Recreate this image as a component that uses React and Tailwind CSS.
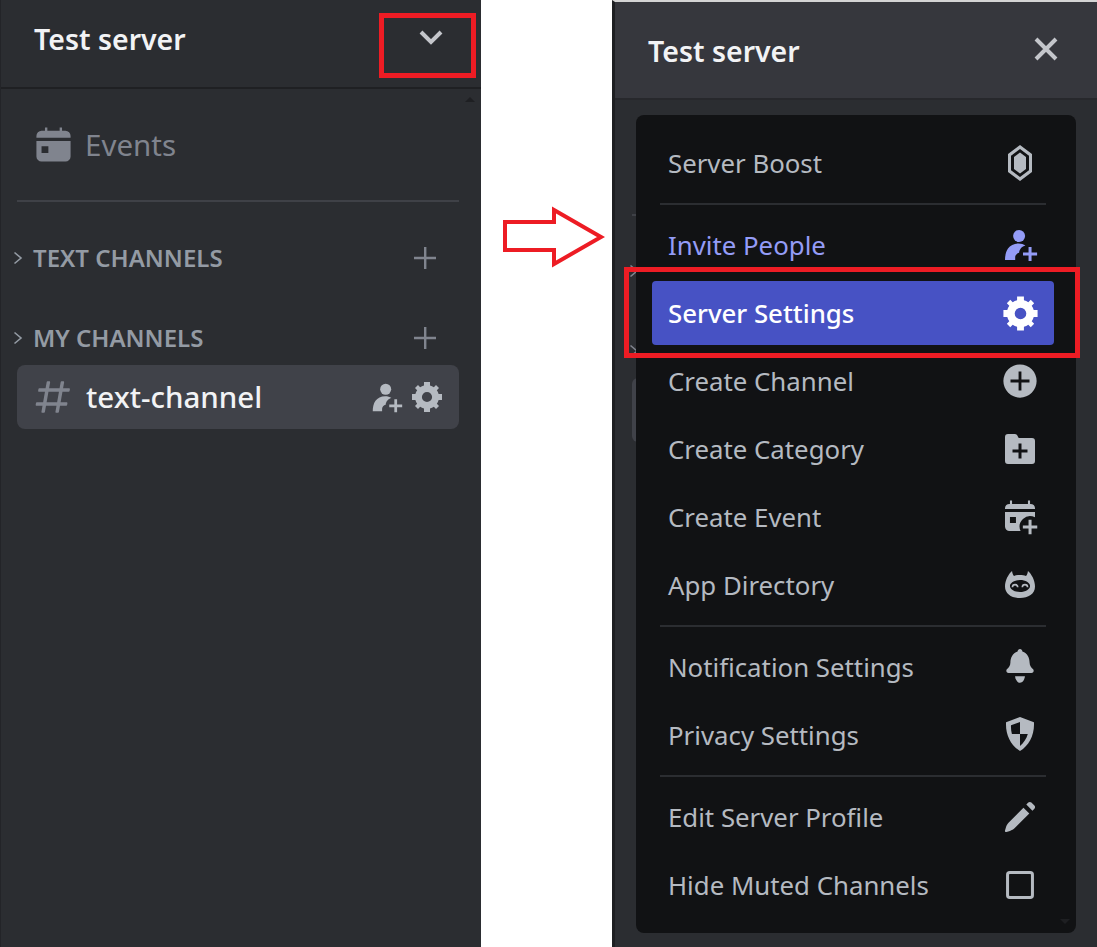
import React from "react";

const GEAR =
  "M19.738 10H22V14H19.739C19.498 14.931 19.1 15.798 18.565 16.564L20 18L18 20L16.565 18.564C15.797 19.099 14.932 19.498 14 19.738V22H10V19.738C9.069 19.498 8.203 19.099 7.436 18.564L6 20L4 18L5.436 16.564C4.901 15.799 4.502 14.932 4.262 14H2V10H4.262C4.502 9.068 4.9 8.202 5.436 7.436L4 6L6 4L7.436 5.436C8.202 4.9 9.068 4.502 10 4.262V2H14V4.261C14.932 4.502 15.797 4.9 16.565 5.435L18 4L20 6L18.564 7.436C19.099 8.202 19.498 9.069 19.738 10ZM12 15.4A3.4 3.4 0 1 0 12 8.6A3.4 3.4 0 1 0 12 15.4Z";

const HASH =
  "M5.88657 21C5.57547 21 5.3399 20.7189 5.39427 20.4126L6.00001 17H2.59511C2.28449 17 2.04905 16.7198 2.10259 16.4138L2.27759 15.4138C2.31946 15.1746 2.52722 15 2.77011 15H6.35001L7.41001 9H4.00511C3.69449 9 3.45905 8.71977 3.51259 8.41381L3.68759 7.41381C3.72946 7.17456 3.93722 7 4.18011 7H7.76001L8.39677 3.41262C8.43914 3.17391 8.64664 3 8.88907 3H9.87344C10.1845 3 10.4201 3.28107 10.3657 3.58738L9.76001 7H15.76L16.3968 3.41262C16.4391 3.17391 16.6466 3 16.8891 3H17.8734C18.1845 3 18.4201 3.28107 18.3657 3.58738L17.76 7H21.1649C21.4755 7 21.711 7.28023 21.6574 7.58619L21.4824 8.58619C21.4406 8.82544 21.2328 9 20.9899 9H17.41L16.35 15H19.7549C20.0655 15 20.301 15.2802 20.2474 15.5862L20.0724 16.5862C20.0306 16.8254 19.8228 17 19.5799 17H16L15.3632 20.5874C15.3209 20.8261 15.1134 21 14.8709 21H13.8866C13.5755 21 13.3399 20.7189 13.3943 20.4126L14 17H8.00001L7.36325 20.5874C7.32088 20.8261 7.11337 21 6.87094 21H5.88657ZM9.41045 9L8.35045 15H14.3504L15.4104 9H9.41045Z";

function Svg({ size = 36, className = "", children }) {
  return (
    <svg width={size} height={size} viewBox="0 0 24 24" fill="currentColor" className={`shrink-0 ${className}`}>
      {children}
    </svg>
  );
}

const GearIcon = (p) => <Svg {...p}><path fillRule="evenodd" d={GEAR} /></Svg>;
const HashIcon = (p) => <Svg {...p}><path d={HASH} /></Svg>;

function InviteIcon(p) {
  return (
    <Svg {...p}>
      <circle cx="11.4" cy="6" r="4" />
      <path d="M2 22c0-2.600.5-5.500 2-7.600C5.500 12.200 8 11 11 11c1.800 0 3.500.5 4.600 1.300-2.300.5-4 2.500-4.200 4.900-1.500.3-2.600 1.500-2.600 3V22H2z" />
      <path d="M17.700 13.300h2v3.700h3.700v2h-3.700v3.700h-2V19H14v-2h3.700z" />
    </Svg>
  );
}

function CalendarIcon(p) {
  return (
    <Svg {...p}>
      <path d="M7 2h1.400v2h7.200V2H17v2h2a3 3 0 0 1 3 3v1H2V7a3 3 0 0 1 3-3h2z" />
      <path fillRule="evenodd" d="M2 10h20v9a3 3 0 0 1-3 3H5a3 3 0 0 1-3-3v-9zm3 3v4h4v-4H5z" />
    </Svg>
  );
}

function BoostIcon(p) {
  return (
    <Svg {...p}>
      <path fillRule="evenodd" d="M12 0l8 6v12l-8 6-8-6V6l8-6zm0 2.600L6 7.200v9.600l6 4.600 6-4.600V7.200l-6-4.600z" />
      <path d="M12 5l4 3v8l-4 3-4-3V8z" />
    </Svg>
  );
}

function CirclePlusIcon(p) {
  return (
    <Svg {...p}>
      <path
        fillRule="evenodd"
        d="M12 1.500a10.500 10.500 0 1 1 0 21 10.500 10.500 0 0 1 0-21zM11.100 6v5.100H6v1.800h5.100V18h1.800v-5.100H18v-1.800h-5.100V6h-1.800z"
      />
    </Svg>
  );
}

function FolderPlusIcon(p) {
  return (
    <Svg {...p}>
      <path
        fillRule="evenodd"
        d="M4 2h4.500c1.300 0 1.700.8 2.200 2 .2.500.500.700 1 .700H20a2 2 0 0 1 2 2V20a2 2 0 0 1-2 2H4a2 2 0 0 1-2-2V4a2 2 0 0 1 2-2zm7 6.400v4H7v2h4v4h2v-4h4v-2h-4v-4h-2z"
      />
    </Svg>
  );
}

function EventPlusIcon(p) {
  return (
    <Svg {...p}>
      <path d="M5.300 1h1.400v2.300h10.600V1h1.400v2.300h.3A3 3 0 0 1 22 6v.700H2V6a3 3 0 0 1 3-2.700h.3z" />
      <path
        fillRule="evenodd"
        d="M2 8.700h20v3.500a7 7 0 0 0-9.600 9.100H5a3 3 0 0 1-3-3V8.700zm3.300 3.300v4h4v-4h-4z"
      />
      <path d="M17.700 13.900h2v3.800h3.800v2h-3.800v3.800h-2v-3.800h-3.800v-2h3.800z" />
    </Svg>
  );
}

function BotIcon(p) {
  return (
    <Svg {...p}>
      <path
        fillRule="evenodd"
        d="M6.700 2.700C6.900 4 7.200 5.200 8 6c1.200-.5 2.500-.7 4-.7s2.800.2 4 .7c.8-.8 1.100-2 1.300-3.300C19.700 4.700 22 9 22 13c0 5-4.500 7.700-10 7.700S2 18 2 13c0-4 2.300-8.300 4.700-10.300zM12 8.700c-3.700 0-6.700 1.800-6.700 4s3 4 6.700 4 6.700-1.800 6.700-4-3-4-6.700-4z"
      />
      <path d="M6.400 13.500a2.300 2.300 0 0 1 4.600 0H9.900a1.200 1.200 0 0 0-2.400 0H6.400zM13 13.500a2.300 2.300 0 0 1 4.600 0h-1.100a1.200 1.200 0 0 0-2.400 0H13z" />
    </Svg>
  );
}

function BellIcon(p) {
  return (
    <Svg {...p}>
      <path d="M12 0c.9 0 1.500.6 1.600 1.600C17 2.600 18.400 6 18.400 9c0 2.400 1.200 3.400 2.200 4.300.9.800.7 2.700-1 2.700H4.400c-1.700 0-1.900-1.900-1-2.700 1-.9 2.200-1.900 2.200-4.300C5.600 6 7 2.600 10.400 1.600 10.500.6 11.100 0 12 0z" />
      <path d="M8.700 18.200h6.600c-.3 2.500-1.700 4.300-3.300 4.300s-3-1.800-3.300-4.300z" />
    </Svg>
  );
}

function ShieldIcon(p) {
  return (
    <Svg {...p}>
      <path
        fillRule="evenodd"
        d="M12 0l9.300 3.500c.5 8.500-3.300 15.500-9.300 19.200C6 19 2.200 12 2.700 3.500L12 0zm0 3.300L6 5.500c-.1 2 .1 4 .6 5.800H12v-8zm0 8v8c2.500-2.100 4.300-4.800 5.200-8H12z"
      />
    </Svg>
  );
}

function PencilIcon(p) {
  return (
    <Svg {...p}>
      <path d="M17.500 2.400c.6-.6 1.500-.6 2.100 0l2 2c.6.6.6 1.500 0 2.100l-1.300 1.300-4.100-4.100 1.300-1.300z" />
      <path d="M14.300 5.800l3.900 3.900L8.500 19.400c-.9.900-2 1.500-3.200 1.900l-2.300.7c-.7.200-1.200-.3-1-1l.8-2.600c.3-1.100.9-2 1.700-2.800L14.300 5.800z" />
    </Svg>
  );
}

function SquareIcon(p) {
  return (
    <Svg {...p}>
      <rect x="3.700" y="3.700" width="16.600" height="16.600" rx="1.500" fill="none" stroke="currentColor" strokeWidth="2" />
    </Svg>
  );
}

function Chevron({ className = "" }) {
  return (
    <svg width="10" height="14" viewBox="0 0 10 14" fill="none" stroke="currentColor" strokeWidth="1.600" className={className}>
      <path d="M1.500 1.500L8 7L1.500 12.500" />
    </svg>
  );
}

function PlusLine() {
  return (
    <svg width="22" height="22" viewBox="0 0 22 22" fill="currentColor" className="text-[#80848e]">
      <path d="M10 0h2.400v9.800H22v2.400h-9.600V22H10v-9.800H0V9.800h10z" />
    </svg>
  );
}

function Category({ label, className = "" }) {
  return (
    <div className={`flex items-center h-[30px] ${className}`}>
      <Chevron className="text-[#949ba4] ml-[12px] mr-[10px] shrink-0" />
      <span className="text-[24px] font-semibold text-[#949ba4] uppercase leading-none">{label}</span>
      <span className="ml-auto mr-[45px] flex"><PlusLine /></span>
    </div>
  );
}

function LeftPanel() {
  return (
    <aside className="relative w-[481px] h-full bg-[#2b2d31] border-l border-[#232428] flex flex-col shrink-0">
      <header className="h-[89px] border-b-2 border-[#1f2023] flex flex-col shrink-0 pl-[33px] pt-[19px] pr-[33px]">
        <div className="flex items-center justify-between">
          <h1 className="text-[28.500px] font-semibold leading-[40px] text-[#f2f3f5]">Test server</h1>
          <svg width="26" height="18" viewBox="0 0 26 18" fill="none" stroke="#c4c6cb" strokeWidth="4" className="mb-[2px] mr-[4px]">
            <path d="M3 3L13 13L23 3" />
          </svg>
        </div>
      </header>
      <div className="absolute right-[6px] top-[97px] w-0 h-0 border-x-[5px] border-x-transparent border-b-[5px] border-b-[#1e1f22]" />

      <div className="flex items-center h-[40px] mt-[36px] ml-[34px] text-[#80848e]">
        <CalendarIcon size={41} className="-ml-[2px] mr-[11px] -mt-[1px]" />
        <span className="text-[29.500px] leading-none">Events</span>
      </div>
      <div className="h-[2px] bg-[#3f4147] ml-[16px] mr-[22px] mt-[35px]" />

      <Category label="Text Channels" className="mt-[41px]" />
      <Category label="My Channels" className="mt-[50px]" />

      <div className="h-[64px] mt-[12px] ml-[16px] mr-[22px] bg-[#404249] rounded-lg flex items-center pl-[15px] pr-[14px]">
        <HashIcon size={42} className="text-[#80848e] mr-[12px]" />
        <span className="text-[29.500px] font-medium text-[#f2f3f5] leading-none">text-channel</span>
        <span className="ml-auto flex items-center gap-[6px] text-[#b5bac1]">
          <InviteIcon size={33} />
          <GearIcon size={36} />
        </span>
      </div>

      {/* red highlight round the chevron */}
      <div className="absolute left-[378px] top-[13px] w-[97px] h-[65px] border-[5px] border-[#ed1c24]" />
    </aside>
  );
}

function ArrowGap() {
  return (
    <div className="w-[131px] h-full bg-white shrink-0 pt-[205px] pl-[20px]">
      <svg width="110" height="66" viewBox="0 0 110 66" fill="#fff" stroke="#ed1c24" strokeWidth="4">
        <path d="M4 17H53V5L100 32L53 59V45H4Z" />
      </svg>
    </div>
  );
}

function MenuRow({ label, icon: Icon, size = 36, tone = "text-[#b5bac1]", active = false }) {
  return (
    <div
      className={`h-[64px] flex items-center justify-between pl-[16px] pr-[16px] rounded-[4px] text-[25.800px] leading-none ${tone} ${
        active ? "bg-[#4752c4] text-white font-medium" : ""
      }`}
    >
      <span className="mt-[2px]">{label}</span>
      <span className="w-[36px] h-[36px] flex items-center justify-center">
        <Icon size={size} />
      </span>
    </div>
  );
}

const Divider = () => <div className="h-[2px] bg-[#2b2d31] mx-[8px] my-[4px]" />;

function RightPanel() {
  return (
    <section className="relative flex-1 h-full bg-[#2b2d31] border-l-[3px] border-[#1e1f22] border-t-2 border-t-[#d4d4d4] flex flex-col">
      <header className="h-[98px] bg-[#36373d] border-b-2 border-[#27282c] flex items-center justify-between pl-[33px] pr-[38px] shrink-0">
        <h1 className="text-[28.500px] font-semibold text-[#f2f3f5] leading-none mt-[2px]">Test server</h1>
        <svg width="26" height="26" viewBox="0 0 26 26" fill="none" stroke="#c4c6cb" strokeWidth="4" className="mb-[2px]">
          <path d="M3 3L23 23M23 3L3 23" />
        </svg>
      </header>

      {/* what shows of the channel list behind the menu */}
      <div className="absolute left-[17px] top-[212px] w-[4px] h-[2px] bg-[#3f4147]" />
      <Chevron className="absolute left-[14px] top-[262px] text-[#80848e]" />
      <Chevron className="absolute left-[14px] top-[342px] text-[#80848e]" />
      <div className="absolute left-[17px] top-[376px] w-[6px] h-[64px] bg-[#404249] rounded-l-lg" />

      <div className="relative mt-[15px] ml-[21px] mr-[21px] h-[818px] bg-[#111214] rounded-lg pt-[16px] pl-[16px] pr-[22px] flex flex-col gap-1">
        <MenuRow label="Server Boost" icon={BoostIcon} />
        <Divider />
        <MenuRow label="Invite People" icon={InviteIcon} tone="text-[#949cf7]" />
        <MenuRow label="Server Settings" icon={GearIcon} size={41} active />
        <MenuRow label="Create Channel" icon={CirclePlusIcon} size={38} />
        <MenuRow label="Create Category" icon={FolderPlusIcon} />
        <MenuRow label="Create Event" icon={EventPlusIcon} />
        <MenuRow label="App Directory" icon={BotIcon} />
        <Divider />
        <MenuRow label="Notification Settings" icon={BellIcon} />
        <MenuRow label="Privacy Settings" icon={ShieldIcon} />
        <Divider />
        <MenuRow label="Edit Server Profile" icon={PencilIcon} />
        <MenuRow label="Hide Muted Channels" icon={SquareIcon} />
        <div className="absolute right-[6px] bottom-[9px] w-0 h-0 border-x-[5px] border-x-transparent border-t-[5px] border-t-[#1e1f22]" />
      </div>

      {/* red highlight round the selected row */}
      <div className="absolute left-[9px] top-[265px] w-[456px] h-[91px] border-[5px] border-[#ed1c24]" />
    </section>
  );
}

export default function App() {
  return (
    <div className="w-[1097px] h-[947px] flex bg-white overflow-hidden font-['Noto_Sans','Open_Sans',sans-serif]">
      <LeftPanel />
      <ArrowGap />
      <RightPanel />
    </div>
  );
}
